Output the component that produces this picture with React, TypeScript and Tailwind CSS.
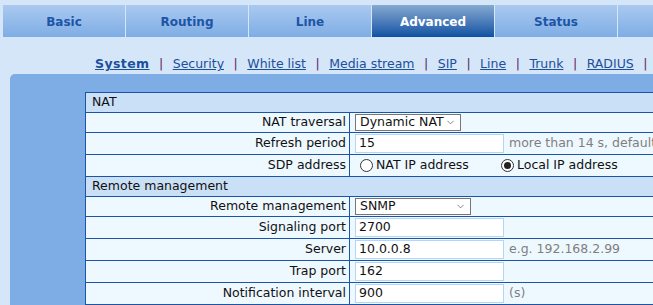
import { ChevronDown } from 'lucide-react';

const tabs = ['Basic', 'Routing', 'Line', 'Advanced', 'Status', ''];
const subLinks = ['System', 'Security', 'White list', 'Media stream', 'SIP', 'Line', 'Trunk', 'RADIUS'];

const Select = ({ value, width }: { value: string; width: string }) => (
    <div className={`flex h-[17px] items-center justify-between border border-[#767676] bg-white pl-[4px] pr-[4px] ${width}`}>
        <span className="leading-none">{value}</span>
        <ChevronDown className="size-[11px] text-[#555]" strokeWidth={1.5} />
    </div>
);

const Input = ({ value }: { value: string }) => (
    <div className="flex h-[19px] w-[149px] items-center border border-[#b3d6f6] bg-white pl-[3px]">
        {value}
    </div>
);

const Radio = ({ checked, label }: { checked?: boolean; label: string }) => (
    <label className="flex items-center">
        <span className="mr-[3px] flex size-[13px] items-center justify-center rounded-full border border-[#333] bg-white">
            {checked && <span className="size-[7px] rounded-full bg-[#222]"></span>}
        </span>
        {label}
    </label>
);

const Header = ({ title }: { title: string }) => (
    <div className="flex h-[20px] items-center border-b border-[#1b55a7] bg-[#c9e0f6] pl-[6px]">{title}</div>
);

const Row = ({ label, h, children }: { label: string; h: string; children: React.ReactNode }) => (
    <div className={`flex border-b border-[#1b55a7] bg-[#eef8ff] ${h}`}>
        <div className="flex w-[264px] shrink-0 items-center justify-end border-r border-[#1b55a7] pr-[3px]">{label}</div>
        <div className="flex items-center gap-[5px] pl-[5px] whitespace-nowrap">{children}</div>
    </div>
);

const Hint = ({ text }: { text: string }) => <span className="text-[#7f7f7f]">{text}</span>;

export default function App() {
    return (
        <div className="h-[305px] w-[653px] overflow-hidden bg-[#d5e6f8] text-[12px] text-[#111] [font-family:'DejaVu_Sans',Verdana,sans-serif]">
            <nav className="flex pt-[5px] pl-[3px]">
                {tabs.map((t) => (
                    <div
                        key={t || 'end'}
                        className={`mr-px flex h-[32px] w-[122px] shrink-0 items-center justify-center pt-[1px] font-bold ${
                            t === 'Advanced'
                                ? 'bg-gradient-to-b from-[#86a9d0] to-[#0b52a3] text-white'
                                : 'bg-gradient-to-b from-[#aac9ef] to-[#7eade5] text-[#1d55a6]'
                        }`}
                    >
                        {t}
                    </div>
                ))}
            </nav>
            <div className="flex h-[37px] items-end pl-[95px] text-[12.5px] whitespace-nowrap">
                {subLinks.map((l, i) => (
                    <span key={l + i} className="flex items-center">
                        <a href="#" className={`text-[#1c4f9c] underline ${i === 0 ? 'font-bold tracking-[0.4px]' : ''}`}>
                            {l}
                        </a>
                        <span className="mx-[9.5px] text-[#5b2563]">|</span>
                    </span>
                ))}
            </div>
            <div className="ml-[10px] h-[300px] rounded-tl-[5px] bg-[#7eace4] pt-[18px] pl-[75px] text-[12.5px]">
                <div className="w-[600px] border-t border-l border-[#1b55a7]">
                    <Header title="NAT" />
                    <Row label="NAT traversal" h="h-[20px]">
                        <Select value="Dynamic NAT" width="w-[106px]" />
                    </Row>
                    <Row label="Refresh period" h="h-[22px]">
                        <Input value="15" />
                        <Hint text="more than 14 s, default 40" />
                    </Row>
                    <Row label="SDP address" h="h-[22px]">
                        <div className="ml-[5px] w-[136px]">
                            <Radio label="NAT IP address" />
                        </div>
                        <Radio checked label="Local IP address" />
                    </Row>
                    <Header title="Remote management" />
                    <Row label="Remote management" h="h-[20px]">
                        <Select value="SNMP" width="w-[116px]" />
                    </Row>
                    <Row label="Signaling port" h="h-[22px]">
                        <Input value="2700" />
                    </Row>
                    <Row label="Server" h="h-[22px]">
                        <Input value="10.0.0.8" />
                        <Hint text="e.g. 192.168.2.99" />
                    </Row>
                    <Row label="Trap port" h="h-[22px]">
                        <Input value="162" />
                    </Row>
                    <Row label="Notification interval" h="h-[22px]">
                        <Input value="900" />
                        <Hint text="(s)" />
                    </Row>
                </div>
            </div>
        </div>
    );
}
